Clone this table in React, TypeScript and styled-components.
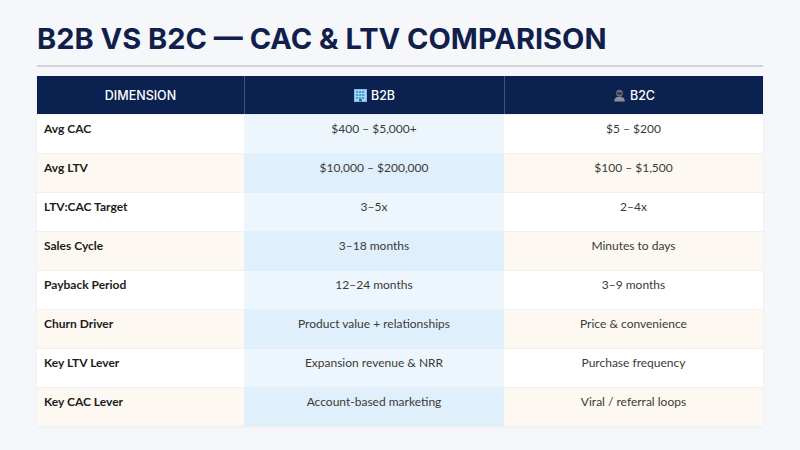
import React from 'react';
import styled, { createGlobalStyle } from 'styled-components';

const GlobalStyle = createGlobalStyle`
  html, body {
    margin: 0;
    padding: 0;
    background: #f6f7fb;
  }
  * {
    box-sizing: border-box;
  }
`;

interface RowData {
  label: string;
  b2b: string;
  b2c: string;
}

const rows: RowData[] = [
  { label: 'Avg CAC', b2b: '$400 – $5,000+', b2c: '$5 – $200' },
  { label: 'Avg LTV', b2b: '$10,000 – $200,000', b2c: '$100 – $1,500' },
  { label: 'LTV:CAC Target', b2b: '3–5x', b2c: '2–4x' },
  { label: 'Sales Cycle', b2b: '3–18 months', b2c: 'Minutes to days' },
  { label: 'Payback Period', b2b: '12–24 months', b2c: '3–9 months' },
  { label: 'Churn Driver', b2b: 'Product value + relationships', b2c: 'Price & convenience' },
  { label: 'Key LTV Lever', b2b: 'Expansion revenue & NRR', b2c: 'Purchase frequency' },
  { label: 'Key CAC Lever', b2b: 'Account-based marketing', b2c: 'Viral / referral loops' },
];

const BuildingIcon = () => (
  <svg width='13' height='13' viewBox='0 0 13 13'>
    <rect x='0.5' y='0.5' width='12' height='12' fill='#a7d8f4' stroke='#7bbde4' />
    {[2, 5, 8].map((y) =>
      [2, 5, 8].map((x) => (
        <rect key={`${x}-${y}`} x={x} y={y} width='2.2' height='2' fill='#4a9ad6' />
      ))
    )}
    <rect x='5' y='10' width='3' height='2.5' fill='#2f6fa8' />
  </svg>
);

const PersonIcon = () => (
  <svg width='13' height='13' viewBox='0 0 13 13'>
    <circle cx='6.5' cy='4.2' r='3.4' fill='#6b6f78' />
    <rect x='4' y='3.4' width='5' height='2' rx='1' fill='#2a2d33' />
    <path d='M1.2 12.5 C1.2 8.8 3.4 7.8 6.5 7.8 C9.6 7.8 11.8 8.8 11.8 12.5 Z' fill='#8a8e96' />
  </svg>
);

const App: React.FC = () => {
  return (
    <Page>
      <GlobalStyle />
      <Title>B2B VS B2C — CAC &amp; LTV COMPARISON</Title>
      <Divider />
      <Table>
        <HeadCell>DIMENSION</HeadCell>
        <HeadCell>
          <BuildingIcon />
          B2B
        </HeadCell>
        <HeadCell>
          <PersonIcon />
          B2C
        </HeadCell>
        {rows.map((row, i) => {
          const alt = i % 2 === 1;
          return (
            <React.Fragment key={row.label}>
              <LabelCell $alt={alt}>{row.label}</LabelCell>
              <B2BCell $alt={alt}>{row.b2b}</B2BCell>
              <B2CCell $alt={alt}>{row.b2c}</B2CCell>
            </React.Fragment>
          );
        })}
      </Table>
    </Page>
  );
};

const Page = styled.div`
  width: 800px;
  height: 450px;
  padding: 21px 37px 0;
  overflow: hidden;
`;

const Title = styled.h1`
  margin: 0;
  font-family: Inter, 'Liberation Sans', sans-serif;
  font-weight: 700;
  font-size: 29px;
  line-height: 36px;
  letter-spacing: 0;
  color: #10204a;
`;

const Divider = styled.div`
  margin-top: 8px;
  height: 2px;
  background: #d2d5de;
`;

const Table = styled.div`
  margin-top: 9px;
  display: grid;
  grid-template-columns: 207px 260px 259px;
  grid-auto-rows: 39px;
  grid-template-rows: 38px;
  box-shadow: 0 1px 3px rgba(30, 40, 80, 0.06);
`;

const HeadCell = styled.div`
  display: flex;
  align-items: center;
  justify-content: center;
  gap: 4px;
  background: #0b2150;
  color: #ffffff;
  font-family: Inter, 'Liberation Sans', sans-serif;
  font-weight: 500;
  font-size: 12.5px;
  & + & {
    border-left: 1px solid #3d5382;
  }
`;

const BodyCell = styled.div<{ $alt: boolean }>`
  padding-top: 6px;
  font-family: Lato, 'Open Sans', sans-serif;
  font-size: 12px;
  line-height: 15px;
  border-top: 1px solid #f1eff1;
`;

const LabelCell = styled(BodyCell)`
  padding-left: 7px;
  font-weight: 700;
  color: #1c1c1c;
  background: ${(p) => (p.$alt ? '#fdf8f1' : '#ffffff')};
`;

const B2BCell = styled(BodyCell)`
  text-align: center;
  color: #3a3a3a;
  background: ${(p) => (p.$alt ? '#dfeffc' : '#eef6fd')};
  border-top-color: ${(p) => (p.$alt ? '#e6f0fb' : '#e2eefb')};
`;

const B2CCell = styled(BodyCell)`
  text-align: center;
  color: #3a3a3a;
  background: ${(p) => (p.$alt ? '#fdf8f1' : '#ffffff')};
`;

export default App;
